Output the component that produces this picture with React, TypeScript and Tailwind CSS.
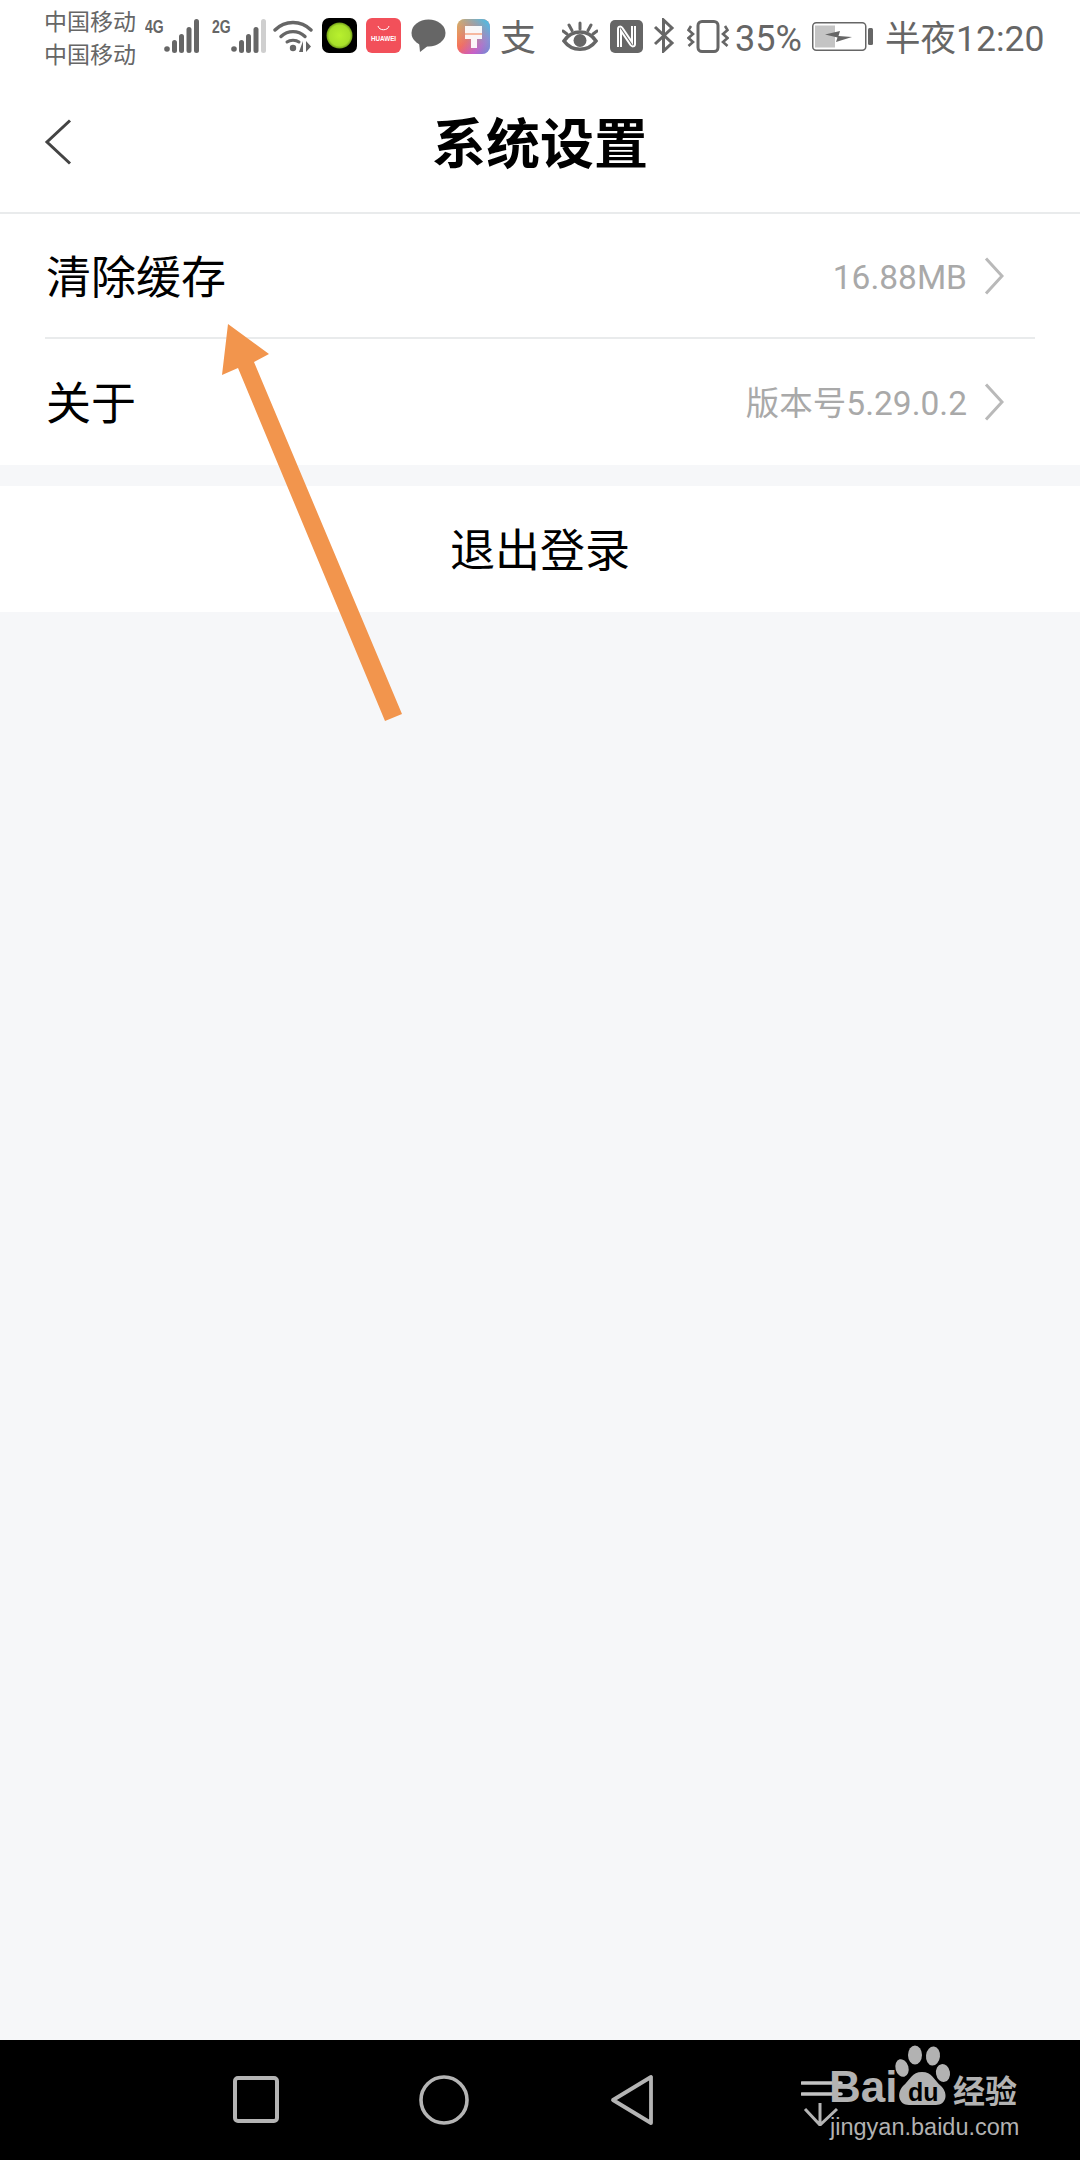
const cjk = "font-['Roboto','Noto_Sans_CJK_SC',sans-serif]";

function Signal({ lastDim }: { lastDim?: boolean }) {
  return (
    <svg width="36" height="34" viewBox="0 0 36 34" className="shrink-0 ml-[-1px]">
      <circle cx="3" cy="30" r="2.8" fill="#666" />
      <rect x="8" y="21" width="5" height="13" rx="2.5" fill="#666" />
      <rect x="15" y="15" width="5" height="19" rx="2.5" fill="#666" />
      <rect x="22.5" y="8" width="5" height="26" rx="2.5" fill="#666" />
      <rect x="30" y="0" width="5" height="34" rx="2.5" fill={lastDim ? "#cfcfcf" : "#666"} />
    </svg>
  );
}

function NetLabel({ label }: { label: string }) {
  return (
    <svg width="20" height="24" viewBox="0 0 20 24" className="shrink-0 self-start mt-[-4px]">
      <text x="0" y="13.7" transform="scale(1 1.35)" fontFamily="Liberation Sans" fontWeight="700" fontSize="14" fill="#666">
        {label}
      </text>
    </svg>
  );
}

function Chevron() {
  return (
    <svg width="20" height="38" viewBox="0 0 20 38" className="shrink-0 ml-[17px]">
      <path d="M2 1.5 L18 19 L2 36.5" fill="none" stroke="#b9b9b9" strokeWidth="3" />
    </svg>
  );
}

function StatusBar() {
  return (
    <div className={`h-[75px] flex items-center pl-[44px] text-[#666] shrink-0 ${cjk}`}>
      <div className="w-[92px] text-[23px] leading-[33px] flex flex-col whitespace-nowrap pt-[2px]">
        <span>中国移动</span>
        <span>中国移动</span>
      </div>
      <div className="ml-[9px] flex h-[34px] mt-[-4px]">
        <NetLabel label="4G" />
        <Signal />
      </div>
      <div className="ml-[12px] flex h-[34px] mt-[-4px]">
        <NetLabel label="2G" />
        <Signal lastDim />
      </div>
      <svg width="40" height="34" viewBox="0 0 40 34" className="ml-[6px] mt-[-4px] shrink-0">
        <path d="M2 11 C12 1 28 1 38 11" fill="none" stroke="#666" strokeWidth="3.4" strokeLinecap="round" />
        <path d="M8 17.5 C15 11 25 11 32 17.5" fill="none" stroke="#666" strokeWidth="3.4" strokeLinecap="round" />
        <path d="M14 23 C17 20.5 23 20.5 26 23" fill="none" stroke="#666" strokeWidth="3" strokeLinecap="round" />
        <circle cx="20" cy="29" r="3.2" fill="#666" />
        <path d="M30 22 L30 33 L26 33 Z M33 22 L33 33 L38 27.5 Z" fill="#666" />
      </svg>
      <svg width="35" height="35" viewBox="0 0 35 35" className="ml-[9px] mt-[-4px] shrink-0">
        <defs>
          <radialGradient id="lime">
            <stop offset="0%" stopColor="#b8f02e" />
            <stop offset="80%" stopColor="#a8e02a" />
            <stop offset="100%" stopColor="#6f9a18" />
          </radialGradient>
        </defs>
        <rect width="35" height="35" rx="7" fill="#000" />
        <circle cx="17.5" cy="17.5" r="13" fill="url(#lime)" />
      </svg>
      <svg width="35" height="35" viewBox="0 0 35 35" className="ml-[9px] mt-[-4px] shrink-0">
        <rect width="35" height="35" rx="6" fill="#f2505a" />
        <path d="M12 8 C13 13 22 13 23 8" fill="none" stroke="#fff" strokeWidth="1" />
        <text x="17.5" y="23" textAnchor="middle" fontSize="6.3" fontWeight="700" fontFamily="Liberation Sans" fill="#fff">HUAWEI</text>
      </svg>
      <svg width="35" height="34" viewBox="0 0 35 34" className="ml-[10px] mt-[-3px] shrink-0">
        <ellipse cx="17.5" cy="14" rx="17" ry="13.5" fill="#666" />
        <path d="M8 23 L9 33 L18 26 Z" fill="#666" />
      </svg>
      <svg width="33" height="35" viewBox="0 0 33 35" className="ml-[11px] mt-[-3px] shrink-0">
        <defs>
          <linearGradient id="brush" x1="0" y1="0" x2="1" y2="1">
            <stop offset="0%" stopColor="#fbc02d" />
            <stop offset="45%" stopColor="#f56a5b" />
            <stop offset="75%" stopColor="#c04fe0" />
            <stop offset="100%" stopColor="#3f7df5" />
          </linearGradient>
          <linearGradient id="brush2" x1="0" y1="1" x2="1" y2="0">
            <stop offset="0%" stopColor="#f77" stopOpacity="0" />
            <stop offset="100%" stopColor="#35c8f5" />
          </linearGradient>
        </defs>
        <rect width="33" height="35" rx="8" fill="url(#brush)" />
        <rect width="33" height="35" rx="8" fill="url(#brush2)" />
        <path d="M8 7 H25 V20 H20 V29 H14 V20 H8 Z" fill="#fff" opacity=".92" />
        <rect x="8" y="14" width="17" height="2" fill="#f6b8a0" />
      </svg>
      <span className="ml-[10px] w-[36px] text-[36px] leading-[36px] mt-[-6px] font-['Noto_Sans_CJK_SC',sans-serif] shrink-0">支</span>
      <svg width="36" height="32" viewBox="0 0 36 32" className="ml-[26px] mt-[-2px] shrink-0">
        <path d="M2 20 C10 8 26 8 34 20 C26 31 10 31 2 20 Z" fill="none" stroke="#666" strokeWidth="3.6" />
        <circle cx="18" cy="19.5" r="6.5" fill="#666" />
        <path d="M18 2 V8 M7 4 L10 9.5 M29 4 L26 9.5 M1 10 L5 13 M35 10 L31 13" stroke="#666" strokeWidth="3" strokeLinecap="round" />
      </svg>
      <svg width="33" height="33" viewBox="0 0 33 33" className="ml-[12px] mt-[-3px] shrink-0">
        <rect width="33" height="33" rx="5" fill="#666" />
        <path d="M8 27 V9 C8 6 11 6 12.5 8 L22 22 V6 M25 6 V24 C25 27 22 27 20.5 25 L11 11 V27" fill="none" stroke="#fff" strokeWidth="2" />
      </svg>
      <svg width="22" height="35" viewBox="0 0 22 35" className="ml-[10px] mt-[-4px] shrink-0">
        <path d="M2 9 L19 25 L10.5 33 V2 L19 10 L2 26" fill="none" stroke="#666" strokeWidth="3" />
      </svg>
      <svg width="42" height="33" viewBox="0 0 42 33" className="ml-[12px] mt-[-3px] shrink-0">
        <rect x="11" y="1.5" width="20" height="30" rx="4" fill="none" stroke="#666" strokeWidth="3" />
        <path d="M4 6 L1.5 10 L6 14 L1.5 18 L6 22 L1.5 26" fill="none" stroke="#666" strokeWidth="2.6" />
        <path d="M38 6 L40.5 10 L36 14 L40.5 18 L36 22 L40.5 26" fill="none" stroke="#666" strokeWidth="2.6" />
      </svg>
      <span className="ml-[6px] w-[67px] text-[36px] leading-[40px] font-['Roboto',sans-serif] mt-[3px] shrink-0">35%</span>
      <svg width="61" height="29" viewBox="0 0 61 29" className="ml-[10px] mt-[-3px] shrink-0">
        <rect x="0.75" y="0.75" width="53" height="27.5" rx="3.5" fill="none" stroke="#666" strokeWidth="1.5" />
        <rect x="3" y="3.5" width="20" height="22" fill="#c4c4c4" />
        <path d="M13 12.5 L28 9 L26.5 14 L40 15 L24 20 L25.5 15.5 Z" fill="#666" />
        <rect x="56" y="6" width="5" height="17" rx="1.5" fill="#666" />
      </svg>
      <span className={`ml-[12px] text-[35.5px] leading-[40px] mt-[3px] whitespace-nowrap shrink-0 ${cjk}`}>半夜12:20</span>
    </div>
  );
}

function Row({ label, value, tall }: { label: string; value: string; tall?: boolean }) {
  return (
    <div className={`${tall ? "h-[126px]" : "h-[123px]"} flex items-center justify-between pl-[1px] pr-[31px]`}>
      <span className="text-[45px] leading-none text-black mt-[5px]">{label}</span>
      <div className="flex items-center">
        <span className="text-[33.5px] leading-none text-[#a9a9a9] mt-[4px]">{value}</span>
        <Chevron />
      </div>
    </div>
  );
}

function Watermark() {
  return (
    <div className="absolute left-[828px] top-[2044px] w-[196px] h-[96px] text-[#b2b2b2]">
      <svg width="64" height="64" viewBox="0 0 64 64" className="absolute left-[64px] top-0">
        <ellipse cx="23" cy="11" rx="7" ry="9.5" fill="#b2b2b2" />
        <ellipse cx="41" cy="12" rx="7" ry="9.5" fill="#b2b2b2" transform="rotate(6 41 12)" />
        <ellipse cx="10" cy="24" rx="6.5" ry="9" fill="#b2b2b2" transform="rotate(-15 10 24)" />
        <ellipse cx="51" cy="29" rx="7" ry="9" fill="#b2b2b2" transform="rotate(-10 51 29)" />
        <path d="M30 28 C40 28 42 36 49 42 C57 50 54 61 44 61 H17 C7 61 4 50 11 42 C18 36 20 28 30 28 Z" fill="#b2b2b2" />
      </svg>
      <span className="absolute left-[80px] top-[34px] text-[25px] leading-[28px] font-bold text-black font-['Liberation_Sans',sans-serif]">du</span>
      <span className="absolute left-[1px] top-[20px] text-[44px] leading-[46px] font-bold font-['Liberation_Sans',sans-serif]">Bai</span>
      <span className="absolute left-[125px] top-[25px] text-[32px] leading-[40px] font-bold font-['Noto_Sans_CJK_SC',sans-serif]">经验</span>
      <span className="absolute left-[2px] top-[67px] text-[23.5px] leading-[32px] font-['Liberation_Sans',sans-serif] whitespace-nowrap">jingyan.baidu.com</span>
    </div>
  );
}

export default function App() {
  return (
    <div className={`relative w-[1080px] h-[2160px] overflow-hidden bg-[#f6f7f9] flex flex-col ${cjk}`}>
      <div className="bg-white shrink-0">
        <StatusBar />
        <div className="relative h-[139px] flex items-center justify-center border-b-2 border-[#e9ebec]">
          <svg width="28" height="46" viewBox="0 0 28 46" className="absolute left-[44px] top-[44px]">
            <path d="M26 1.5 L3 23 L26 44.5" fill="none" stroke="#444" strokeWidth="3" />
          </svg>
          <span className="text-[54px] leading-none font-bold text-black mt-[4px]">系统设置</span>
        </div>
        <div className="pl-[45px] pr-[45px]">
          <Row label="清除缓存" value="16.88MB" />
          <div className="h-[2px] bg-[#e9ebec]" />
          <Row label="关于" value="版本号5.29.0.2" tall />
        </div>
      </div>
      <div className="h-[21px] shrink-0" />
      <div className="h-[126px] bg-white flex items-center justify-center shrink-0">
        <span className="text-[45px] leading-none text-black mt-[5px]">退出登录</span>
      </div>
      <div className="flex-1" />
      <div className="h-[120px] bg-black shrink-0 relative flex items-center">
        <svg width="46" height="47" viewBox="0 0 46 47" className="ml-[233px] mt-[-1px] shrink-0">
          <rect x="2" y="2" width="42" height="43" rx="3" fill="none" stroke="#b4b4b4" strokeWidth="4" />
        </svg>
        <svg width="50" height="50" viewBox="0 0 50 50" className="ml-[140px] shrink-0">
          <circle cx="25" cy="25" r="23" fill="none" stroke="#b4b4b4" strokeWidth="3.6" />
        </svg>
        <svg width="44" height="52" viewBox="0 0 44 52" className="ml-[141px] shrink-0">
          <path d="M41 3 V49 L3 26 Z" fill="none" stroke="#b4b4b4" strokeWidth="3.8" strokeLinejoin="round" />
        </svg>
        <svg width="42" height="50" viewBox="0 0 42 50" className="ml-[147px] mt-[2px] shrink-0">
          <path d="M1 7 H40 M1 18 H40" stroke="#c4c4c4" strokeWidth="3.6" strokeLinecap="round" />
          <path d="M19 27 V48 M4 33 L19 49 L36 33" fill="none" stroke="#b4b4b4" strokeWidth="3" />
        </svg>
      </div>
      <Watermark />
      <svg width="1080" height="2160" viewBox="0 0 1080 2160" className="absolute left-0 top-0 pointer-events-none">
        <path d="M228 324 L269 354 L254 362 L402 714 L385 721 L238 368 L222 375 Z" fill="#f2954d" />
      </svg>
    </div>
  );
}
